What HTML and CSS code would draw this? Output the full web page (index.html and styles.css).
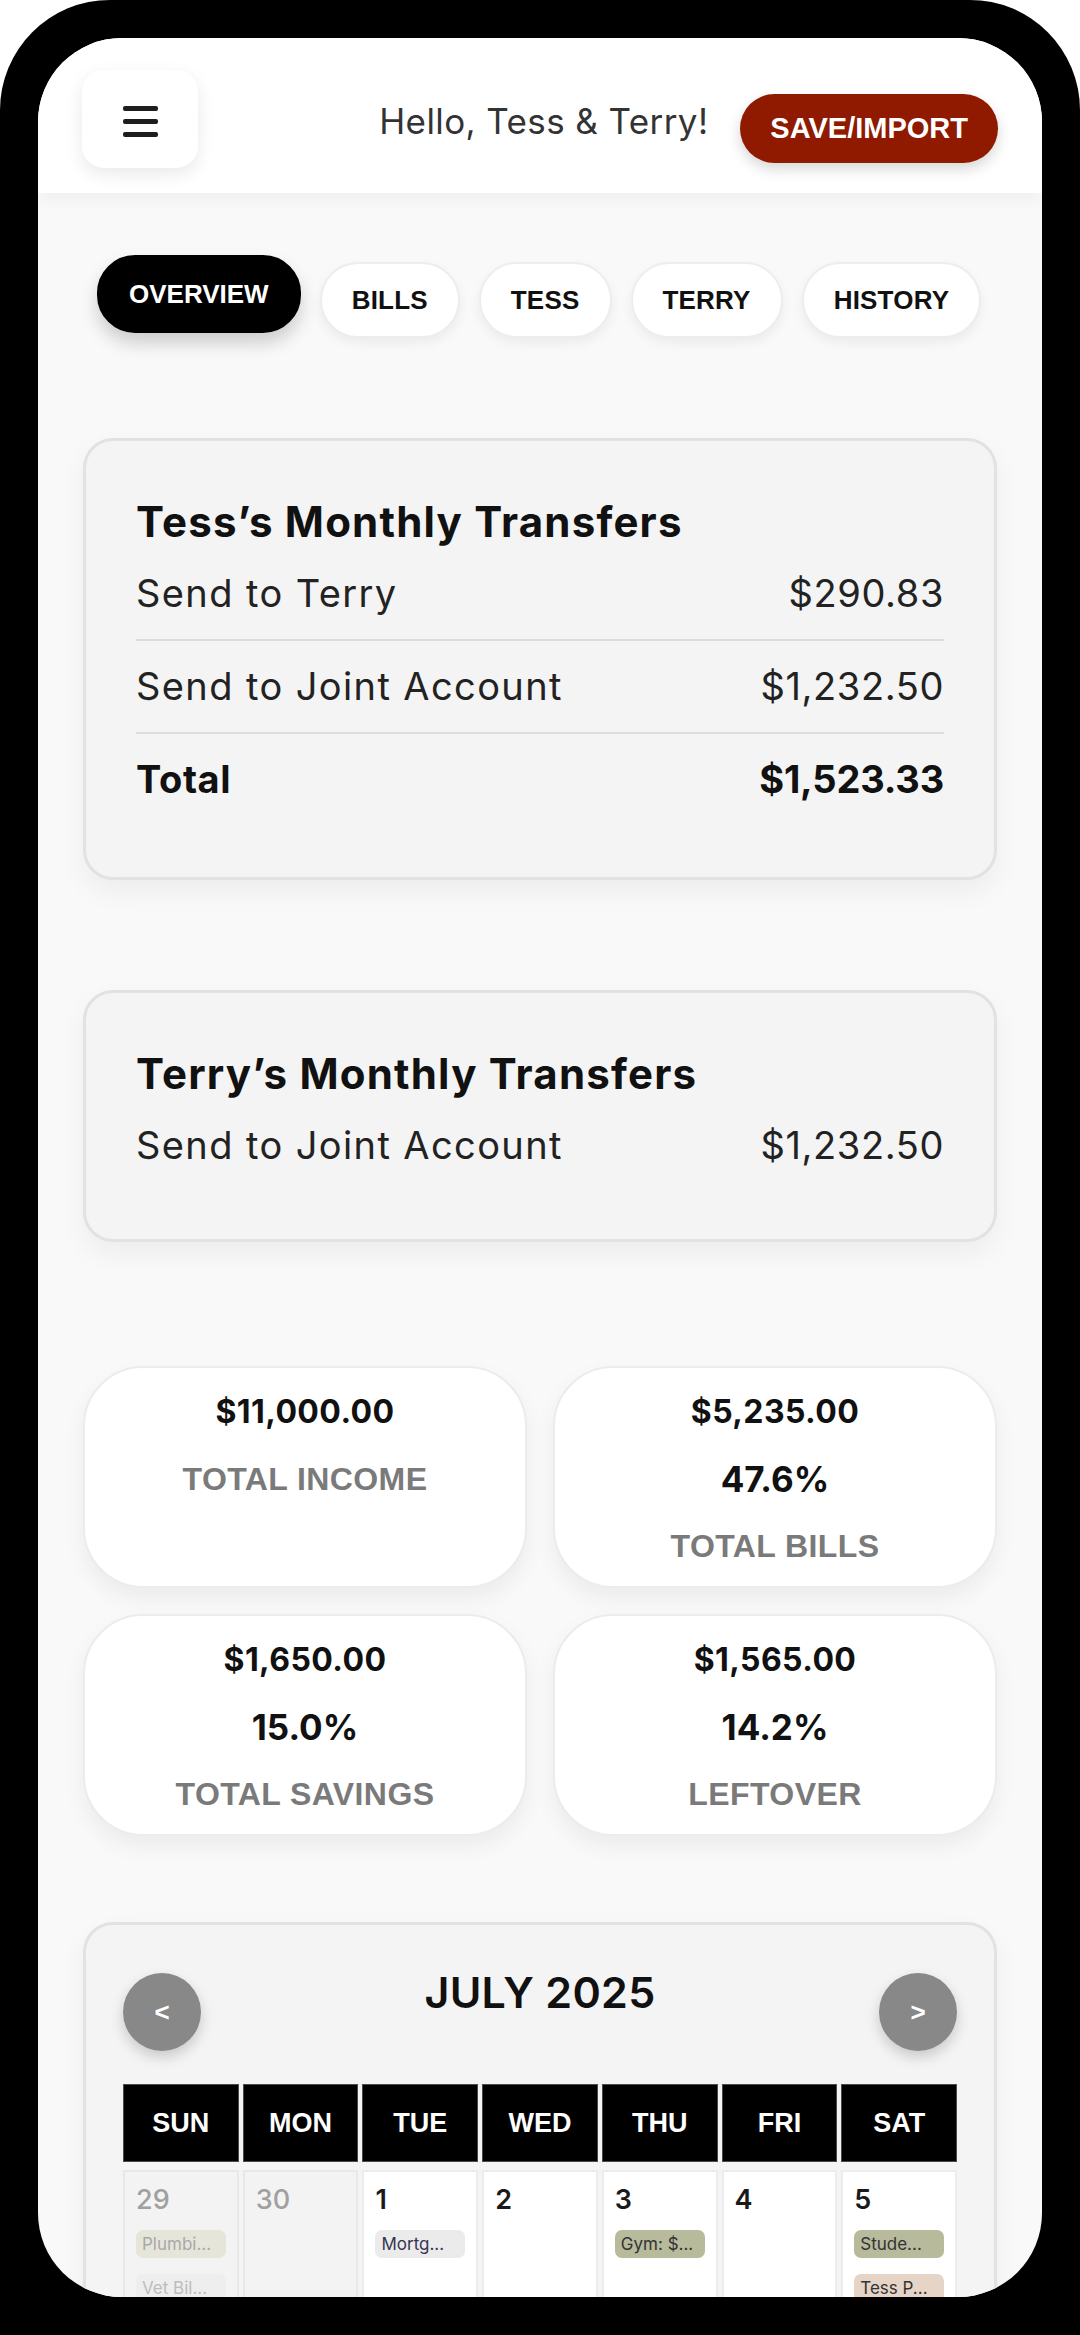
FILE: index.html
```html
<!DOCTYPE html>
<html lang="en">
<head>
<meta charset="utf-8">
<title>Budget Overview</title>
<link rel="stylesheet" href="styles.css">
</head>
<body>
<div class="device">
  <div class="screen">
    <header class="topbar">
      <button class="menu-btn" aria-label="Menu"><span></span><span></span><span></span></button>
      <div class="greeting">Hello, Tess &amp; Terry!</div>
      <button class="save-btn">SAVE/IMPORT</button>
    </header>
    <main class="content">
      <nav class="tabs">
        <a class="tab active">OVERVIEW</a>
        <a class="tab">BILLS</a>
        <a class="tab">TESS</a>
        <a class="tab">TERRY</a>
        <a class="tab">HISTORY</a>
      </nav>

      <section class="card transfers first">
        <h2 class="card-title">Tess’s Monthly Transfers</h2>
        <div class="row"><span>Send to Terry</span><span class="val">$290.83</span></div>
        <div class="row"><span>Send to Joint Account</span><span class="val">$1,232.50</span></div>
        <div class="row total"><span>Total</span><span class="val">$1,523.33</span></div>
      </section>

      <section class="card transfers second">
        <h2 class="card-title">Terry’s Monthly Transfers</h2>
        <div class="row"><span>Send to Joint Account</span><span class="val">$1,232.50</span></div>
      </section>

      <section class="stats">
        <div class="stat">
          <div class="stat-amount">$11,000.00</div>
          <div class="stat-label">TOTAL INCOME</div>
        </div>
        <div class="stat">
          <div class="stat-amount">$5,235.00</div>
          <div class="stat-pct">47.6%</div>
          <div class="stat-label">TOTAL BILLS</div>
        </div>
        <div class="stat">
          <div class="stat-amount">$1,650.00</div>
          <div class="stat-pct">15.0%</div>
          <div class="stat-label">TOTAL SAVINGS</div>
        </div>
        <div class="stat">
          <div class="stat-amount">$1,565.00</div>
          <div class="stat-pct">14.2%</div>
          <div class="stat-label">LEFTOVER</div>
        </div>
      </section>

      <section class="card calendar">
        <div class="cal-head">
          <button class="cal-nav">&lt;</button>
          <h2 class="cal-title">JULY 2025</h2>
          <button class="cal-nav">&gt;</button>
        </div>
        <div class="cal-grid">
          <div class="dow">SUN</div>
          <div class="dow">MON</div>
          <div class="dow">TUE</div>
          <div class="dow">WED</div>
          <div class="dow">THU</div>
          <div class="dow">FRI</div>
          <div class="dow">SAT</div>

          <div class="day other">
            <div class="num">29</div>
            <div class="chip c-plumb">Plumbi...</div>
            <div class="chip c-vet">Vet Bil...</div>
          </div>
          <div class="day other"><div class="num">30</div></div>
          <div class="day">
            <div class="num">1</div>
            <div class="chip c-grey">Mortg...</div>
          </div>
          <div class="day"><div class="num">2</div></div>
          <div class="day">
            <div class="num">3</div>
            <div class="chip c-olive">Gym: $...</div>
          </div>
          <div class="day"><div class="num">4</div></div>
          <div class="day">
            <div class="num">5</div>
            <div class="chip c-olive">Stude...</div>
            <div class="chip c-peach">Tess P...</div>
          </div>
        </div>
      </section>
    </main>
  </div>
</div>
</body>
</html>
```

FILE: styles.css
```css
* {
  box-sizing: border-box;
  margin: 0;
  padding: 0;
}

html, body {
  background: #ffffff;
}

body {
  font-family: "Inter", "Liberation Sans", sans-serif;
  color: #111;
}

button {
  border: none;
  font: inherit;
  cursor: pointer;
}

.device {
  width: 1080px;
  height: 2335px;
  background: #000;
  border-radius: 110px 110px 0 0;
  padding: 38px;
}

.screen {
  width: 1004px;
  height: 2259px;
  background: #f9f9f9;
  border-radius: 84px;
  overflow: hidden;
}

/* top bar */
.topbar {
  height: 155px;
  background: #fff;
  display: flex;
  align-items: flex-start;
  padding: 32px 44px 0 44px;
  box-shadow: 0 6px 16px rgba(0, 0, 0, 0.045);
  position: relative;
  z-index: 1;
}

.menu-btn {
  width: 116px;
  height: 98px;
  background: #fff;
  border-radius: 22px;
  box-shadow: 0 6px 18px rgba(0, 0, 0, 0.09);
  display: flex;
  flex-direction: column;
  align-items: center;
  justify-content: center;
  gap: 8px;
  padding-top: 4px;
}

.menu-btn span {
  display: block;
  width: 35px;
  height: 5px;
  border-radius: 2px;
  background: #1e1e1e;
}

.greeting {
  margin-left: auto;
  margin-top: 30px;
  font-size: 35px;
  line-height: 42px;
  color: #333;
  letter-spacing: 0.4px;
}

.save-btn {
  margin-left: 32px;
  margin-top: 24px;
  height: 69px;
  padding: 0 30px;
  border-radius: 35px;
  background: #8f1a00;
  color: #fff;
  font-family: "Liberation Sans", Arial, sans-serif;
  font-weight: 700;
  font-size: 29px;
  box-shadow: 0 6px 14px rgba(0, 0, 0, 0.16);
}

/* content */
.content {
  padding: 0 45px;
}

.tabs {
  display: flex;
  align-items: flex-start;
  gap: 19px;
  padding: 69px 14px 0;
}

.tab {
  display: block;
  height: 76px;
  line-height: 72px;
  padding: 0 30px;
  border: 2px solid #ededed;
  border-radius: 38px;
  background: #fff;
  color: #111;
  font-family: "Liberation Sans", Arial, sans-serif;
  font-weight: 700;
  font-size: 26px;
  letter-spacing: 0.2px;
  box-shadow: 0 5px 12px rgba(0, 0, 0, 0.06);
}

.tab.active {
  height: 78px;
  line-height: 74px;
  margin-top: -7px;
  padding: 0 30px;
  letter-spacing: 0;
  background: #000;
  border-color: #000;
  color: #fff;
  box-shadow: 0 10px 18px rgba(0, 0, 0, 0.18);
}

/* cards */
.card {
  background: #f4f4f4;
  border: 3px solid #e2e2e2;
  border-radius: 30px;
  box-shadow: 0 12px 28px rgba(0, 0, 0, 0.05);
}

.transfers {
  padding: 55px 50px 52px;
}

.transfers.first {
  margin-top: 100px;
}

.transfers.second {
  margin-top: 110px;
  padding-bottom: 48px;
}

.card-title {
  font-size: 42px;
  line-height: 52px;
  font-weight: 700;
  color: #111;
  letter-spacing: 1.2px;
}

.row {
  display: flex;
  justify-content: space-between;
  padding: 24px 0;
  font-size: 38px;
  line-height: 43px;
  color: #222;
  letter-spacing: 1.4px;
  border-bottom: 2px solid #dcdcdc;
}

.row .val {
  letter-spacing: 0.6px;
}

.row:last-child {
  border-bottom: none;
}

.row.total {
  font-weight: 700;
  color: #111;
  letter-spacing: 0.6px;
}

.row.total .val {
  letter-spacing: -0.2px;
}

/* stats */
.stats {
  margin-top: 124px;
  display: grid;
  grid-template-columns: 1fr 1fr;
  gap: 26px;
}

.stat {
  height: 222px;
  background: #fff;
  border: 2px solid #ececec;
  border-radius: 60px;
  padding: 24px 16px 0;
  display: flex;
  flex-direction: column;
  align-items: center;
  gap: 27px;
  box-shadow: 0 10px 22px rgba(0, 0, 0, 0.06);
}

.stat-amount {
  font-size: 32px;
  line-height: 40px;
  font-weight: 700;
  letter-spacing: 0.4px;
  color: #111;
}

.stat-pct {
  font-size: 35px;
  line-height: 40px;
  font-weight: 700;
  letter-spacing: 0px;
  color: #111;
}

.stat-label {
  font-family: "Liberation Sans", Arial, sans-serif;
  font-size: 32px;
  line-height: 40px;
  font-weight: 700;
  color: #7a7a7a;
  letter-spacing: 0.4px;
}

/* calendar */
.calendar {
  margin-top: 86px;
  padding: 42px 37px 0;
}

.cal-head {
  display: flex;
  justify-content: space-between;
  align-items: flex-start;
}

.cal-nav {
  width: 78px;
  height: 78px;
  margin-top: 6px;
  border-radius: 50%;
  background: #888;
  color: #fff;
  font-family: "Liberation Sans", Arial, sans-serif;
  font-weight: 700;
  font-size: 26px;
  box-shadow: 0 6px 14px rgba(0, 0, 0, 0.18);
}

.cal-title {
  font-size: 43px;
  line-height: 50px;
  font-weight: 600;
  color: #111;
  letter-spacing: 0.3px;
}

.cal-grid {
  margin-top: 33px;
  display: grid;
  grid-template-columns: repeat(7, 1fr);
  column-gap: 4px;
  row-gap: 8px;
}

.dow {
  height: 78px;
  background: #000;
  border: 1px solid #4a4a4a;
  color: #fff;
  display: flex;
  align-items: center;
  justify-content: center;
  font-family: "Liberation Sans", Arial, sans-serif;
  font-weight: 700;
  font-size: 27px;
}

.day {
  min-height: 220px;
  background: #fff;
  border: 2px solid #ececec;
  padding: 12px 11px;
}

.day.other {
  background: #f3f3f3;
  border-color: #e8e8e8;
}

.num {
  font-size: 27px;
  line-height: 32px;
  font-weight: 600;
  color: #1a1a1a;
}

.day.other .num {
  color: #a0a0a0;
  font-weight: 500;
}

.chip {
  margin-top: 14px;
  height: 28px;
  line-height: 28px;
  padding: 0 6px;
  border-radius: 7px;
  font-size: 17px;
  white-space: nowrap;
  overflow: hidden;
  color: #333;
}

.chip + .chip {
  margin-top: 16px;
}

.c-plumb {
  background: #e5e5da;
  color: #a9a9a9;
}

.c-vet {
  background: #eeeeee;
  color: #bdbdbd;
}

.c-grey {
  background: #ebebeb;
  color: #353552;
}

.c-olive {
  background: #b8ba9c;
  color: #333;
}

.c-peach {
  background: #e6d4c7;
  color: #333;
}
```
